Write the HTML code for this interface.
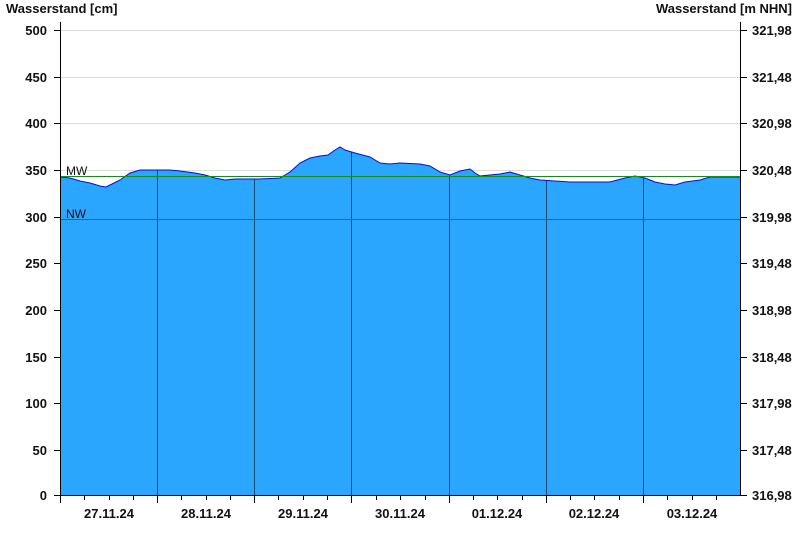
<!DOCTYPE html>
<html><head><meta charset="utf-8"><style>
html,body{margin:0;padding:0;background:#fff;}
svg text{font-family:"Liberation Sans",Arial,sans-serif;font-weight:bold;font-size:13px;fill:#111;}
</style></head><body>
<svg width="800" height="550" xmlns="http://www.w3.org/2000/svg">
<defs><clipPath id="c"><polygon points="61,495 61,177 70,178 80,181 90,183 100,186 106,187 112,184 120,180 130,173 140,170 150,170 170,170 180,171 195,173 205,175 215,178 225,180 235,179 250,179 260,179 280,178 290,172 300,163 310,158 320,156 328,155 335,150 340,147 345,150 355,153 370,157 380,163 390,164 400,163 420,164 430,166 440,172 450,175 460,171 470,169 475,173 480,176 490,175 500,174 510,172 520,175 530,178 540,180 555,181 570,182 590,182 610,182 625,178 635,176 645,178 655,182 665,184 675,185 685,182 700,180 710,177 725,177 740,177 740,495"/></clipPath></defs>
<rect width="800" height="550" fill="#fff"/>
<text x="6" y="13">Wasserstand [cm]</text>
<text x="792" y="13" text-anchor="end">Wasserstand [m NHN]</text>
<g stroke="#dcdcdc" stroke-width="1">
<line x1="61" x2="740" y1="30.5" y2="30.5"/><line x1="61" x2="740" y1="77.5" y2="77.5"/>
<line x1="61" x2="740" y1="123.5" y2="123.5"/><line x1="61" x2="740" y1="170.5" y2="170.5"/>
<line x1="61" x2="740" y1="217.5" y2="217.5"/><line x1="61" x2="740" y1="263.5" y2="263.5"/>
<line x1="61" x2="740" y1="310.5" y2="310.5"/><line x1="61" x2="740" y1="357.5" y2="357.5"/>
<line x1="61" x2="740" y1="403.5" y2="403.5"/><line x1="61" x2="740" y1="450.5" y2="450.5"/>
</g>
<polygon fill="#2ba6ff" stroke="none" points="61,495 61,177 70,178 80,181 90,183 100,186 106,187 112,184 120,180 130,173 140,170 150,170 170,170 180,171 195,173 205,175 215,178 225,180 235,179 250,179 260,179 280,178 290,172 300,163 310,158 320,156 328,155 335,150 340,147 345,150 355,153 370,157 380,163 390,164 400,163 420,164 430,166 440,172 450,175 460,171 470,169 475,173 480,176 490,175 500,174 510,172 520,175 530,178 540,180 555,181 570,182 590,182 610,182 625,178 635,176 645,178 655,182 665,184 675,185 685,182 700,180 710,177 725,177 740,177 740,495"/>
<g stroke="#1a4a70" stroke-width="1" clip-path="url(#c)">
<line x1="157.5" x2="157.5" y1="140" y2="495"/><line x1="254.5" x2="254.5" y1="140" y2="495"/>
<line x1="351.5" x2="351.5" y1="140" y2="495"/><line x1="449.5" x2="449.5" y1="140" y2="495"/>
<line x1="546.5" x2="546.5" y1="140" y2="495"/><line x1="643.5" x2="643.5" y1="140" y2="495"/>
</g>
<polyline fill="none" stroke="#0010e0" stroke-width="1" points="61,177 70,178 80,181 90,183 100,186 106,187 112,184 120,180 130,173 140,170 150,170 170,170 180,171 195,173 205,175 215,178 225,180 235,179 250,179 260,179 280,178 290,172 300,163 310,158 320,156 328,155 335,150 340,147 345,150 355,153 370,157 380,163 390,164 400,163 420,164 430,166 440,172 450,175 460,171 470,169 475,173 480,176 490,175 500,174 510,172 520,175 530,178 540,180 555,181 570,182 590,182 610,182 625,178 635,176 645,178 655,182 665,184 675,185 685,182 700,180 710,177 725,177 740,177"/>
<line x1="61" x2="740" y1="176.5" y2="176.5" stroke="#1a8a1a" stroke-width="1"/>
<line x1="61" x2="740" y1="219.5" y2="219.5" stroke="#d02020" stroke-width="1"/>
<text x="66" y="175" style="font-weight:normal;font-size:12px">MW</text>
<text x="66" y="218" style="font-weight:normal;font-size:12px">NW</text>
<g stroke="#000" stroke-width="1">
<line x1="60.5" x2="60.5" y1="22" y2="495"/><line x1="740.5" x2="740.5" y1="22" y2="495"/>
<line x1="60" x2="741" y1="495.5" y2="495.5"/>
</g>
<g stroke="#000" stroke-width="1">
<line x1="54" x2="60" y1="30.5" y2="30.5"/><line x1="54" x2="60" y1="77.5" y2="77.5"/><line x1="54" x2="60" y1="123.5" y2="123.5"/><line x1="54" x2="60" y1="170.5" y2="170.5"/><line x1="54" x2="60" y1="217.5" y2="217.5"/><line x1="54" x2="60" y1="263.5" y2="263.5"/><line x1="54" x2="60" y1="310.5" y2="310.5"/><line x1="54" x2="60" y1="357.5" y2="357.5"/><line x1="54" x2="60" y1="403.5" y2="403.5"/><line x1="54" x2="60" y1="450.5" y2="450.5"/><line x1="54" x2="60" y1="495.5" y2="495.5"/>
<line x1="741" x2="747" y1="30.5" y2="30.5"/><line x1="741" x2="747" y1="77.5" y2="77.5"/><line x1="741" x2="747" y1="123.5" y2="123.5"/><line x1="741" x2="747" y1="170.5" y2="170.5"/><line x1="741" x2="747" y1="217.5" y2="217.5"/><line x1="741" x2="747" y1="263.5" y2="263.5"/><line x1="741" x2="747" y1="310.5" y2="310.5"/><line x1="741" x2="747" y1="357.5" y2="357.5"/><line x1="741" x2="747" y1="403.5" y2="403.5"/><line x1="741" x2="747" y1="450.5" y2="450.5"/><line x1="741" x2="747" y1="495.5" y2="495.5"/>
<line x1="60.5" x2="60.5" y1="496" y2="503"/><line x1="157.5" x2="157.5" y1="496" y2="503"/><line x1="254.5" x2="254.5" y1="496" y2="503"/><line x1="351.5" x2="351.5" y1="496" y2="503"/><line x1="449.5" x2="449.5" y1="496" y2="503"/><line x1="546.5" x2="546.5" y1="496" y2="503"/><line x1="643.5" x2="643.5" y1="496" y2="503"/>
<line x1="84.5" x2="84.5" y1="496" y2="500"/><line x1="109.5" x2="109.5" y1="496" y2="500"/><line x1="133.5" x2="133.5" y1="496" y2="500"/>
<line x1="181.5" x2="181.5" y1="496" y2="500"/><line x1="206.5" x2="206.5" y1="496" y2="500"/><line x1="230.5" x2="230.5" y1="496" y2="500"/>
<line x1="278.5" x2="278.5" y1="496" y2="500"/><line x1="303.5" x2="303.5" y1="496" y2="500"/><line x1="327.5" x2="327.5" y1="496" y2="500"/>
<line x1="376.5" x2="376.5" y1="496" y2="500"/><line x1="400.5" x2="400.5" y1="496" y2="500"/><line x1="425.5" x2="425.5" y1="496" y2="500"/>
<line x1="473.5" x2="473.5" y1="496" y2="500"/><line x1="497.5" x2="497.5" y1="496" y2="500"/><line x1="522.5" x2="522.5" y1="496" y2="500"/>
<line x1="570.5" x2="570.5" y1="496" y2="500"/><line x1="594.5" x2="594.5" y1="496" y2="500"/><line x1="619.5" x2="619.5" y1="496" y2="500"/>
<line x1="667.5" x2="667.5" y1="496" y2="500"/><line x1="692.5" x2="692.5" y1="496" y2="500"/><line x1="716.5" x2="716.5" y1="496" y2="500"/>
</g>
<g text-anchor="end">
<text x="47" y="35">500</text><text x="47" y="82">450</text><text x="47" y="128">400</text><text x="47" y="175">350</text><text x="47" y="222">300</text><text x="47" y="268">250</text><text x="47" y="315">200</text><text x="47" y="362">150</text><text x="47" y="408">100</text><text x="47" y="455">50</text><text x="47" y="500">0</text>
</g>
<g>
<text x="752" y="35">321,98</text><text x="752" y="82">321,48</text><text x="752" y="128">320,98</text><text x="752" y="175">320,48</text><text x="752" y="222">319,98</text><text x="752" y="268">319,48</text><text x="752" y="315">318,98</text><text x="752" y="362">318,48</text><text x="752" y="408">317,98</text><text x="752" y="455">317,48</text><text x="752" y="500">316,98</text>
</g>
<g text-anchor="middle">
<text x="109" y="518">27.11.24</text><text x="206" y="518">28.11.24</text><text x="303" y="518">29.11.24</text><text x="400" y="518">30.11.24</text><text x="497" y="518">01.12.24</text><text x="594" y="518">02.12.24</text><text x="692" y="518">03.12.24</text>
</g>
</svg>
</body></html>
